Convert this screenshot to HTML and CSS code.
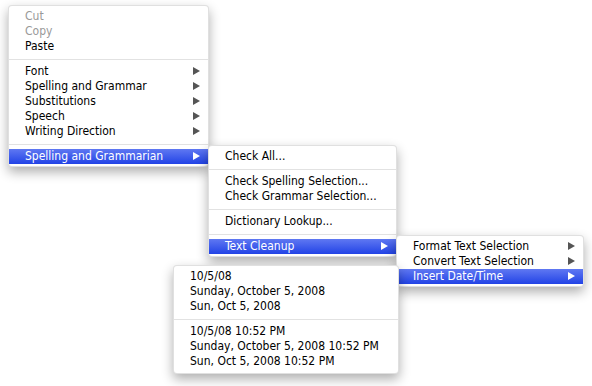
FILE: index.html
```html
<!DOCTYPE html>
<html lang="en">
<head>
	<meta charset="UTF-8">
	<title>Context menu</title>
	<link rel="stylesheet" href="styles.css">
</head>
<body>
	<div id="desk">
		<ul class="menu" id="menu-main">
			<li class="off">Cut</li>
			<li class="off">Copy</li>
			<li>Paste</li>
			<li class="sep"></li>
			<li class="sub">Font</li>
			<li class="sub">Spelling and Grammar</li>
			<li class="sub">Substitutions</li>
			<li class="sub">Speech</li>
			<li class="sub">Writing Direction</li>
			<li class="sep"></li>
			<li class="sub selected">Spelling and Grammarian</li>
		</ul>
		<ul class="menu" id="menu-spell">
			<li>Check All...</li>
			<li class="sep"></li>
			<li>Check Spelling Selection...</li>
			<li>Check Grammar Selection...</li>
			<li class="sep"></li>
			<li>Dictionary Lookup...</li>
			<li class="sep"></li>
			<li class="sub selected">Text Cleanup</li>
		</ul>
		<ul class="menu" id="menu-clean">
			<li class="sub">Format Text Selection</li>
			<li class="sub">Convert Text Selection</li>
			<li class="sub selected">Insert Date/Time</li>
		</ul>
		<ul class="menu" id="menu-date">
			<li>10/5/08</li>
			<li>Sunday, October 5, 2008</li>
			<li>Sun, Oct 5, 2008</li>
			<li class="sep"></li>
			<li>10/5/08 10:52 PM</li>
			<li>Sunday, October 5, 2008 10:52 PM</li>
			<li>Sun, Oct 5, 2008 10:52 PM</li>
		</ul>
	</div>
</body>
</html>
```

FILE: styles.css
```css
*{
	margin: 0;
	padding: 0;
}
ul, ol{
	list-style: none;
}
body{
	background: #fff;
	font-family: "DejaVu Sans Condensed", "DejaVu Sans", sans-serif;
	font-size: 12px;
	color: #000;
}
#desk{
	width: 592px;
	height: 386px;
	position: relative;
	overflow: hidden;
}
.menu{
	position: absolute;
	background: #fff;
	border: 1px solid rgba(0,0,0,0.12);
	border-radius: 4px;
	box-shadow: 0 5px 12px rgba(0,0,0,0.32);
	padding: 3px 0 2px;
}
.menu li{
	height: 15px;
	line-height: 15px;
	padding-left: 16px;
	padding-right: 26px;
	white-space: nowrap;
	position: relative;
}
.menu .off{
	color: #999;
}
.menu .sep{
	height: 1px;
	margin: 5px 0 4px;
	background: #e2e2e2;
	padding: 0;
}
.menu .sub::after{
	content: "";
	position: absolute;
	right: 8px;
	top: 3px;
	border-left: 7px solid #555;
	border-top: 4.5px solid transparent;
	border-bottom: 4.5px solid transparent;
}
.menu .selected{
	color: #fff;
	background: linear-gradient(#5f78f2, #2243e6);
}
.menu .selected::after{
	border-left-color: #fff;
}
#menu-main{
	left: 8px;
	top: 5px;
	width: 199px;
	z-index: 1;
}
#menu-spell{
	left: 208px;
	top: 145px;
	width: 187px;
	z-index: 2;
}
#menu-clean{
	left: 396px;
	top: 235px;
	width: 186px;
	z-index: 3;
}
#menu-date{
	left: 173px;
	top: 265px;
	width: 224px;
	z-index: 4;
	padding-bottom: 4px;
}
```
